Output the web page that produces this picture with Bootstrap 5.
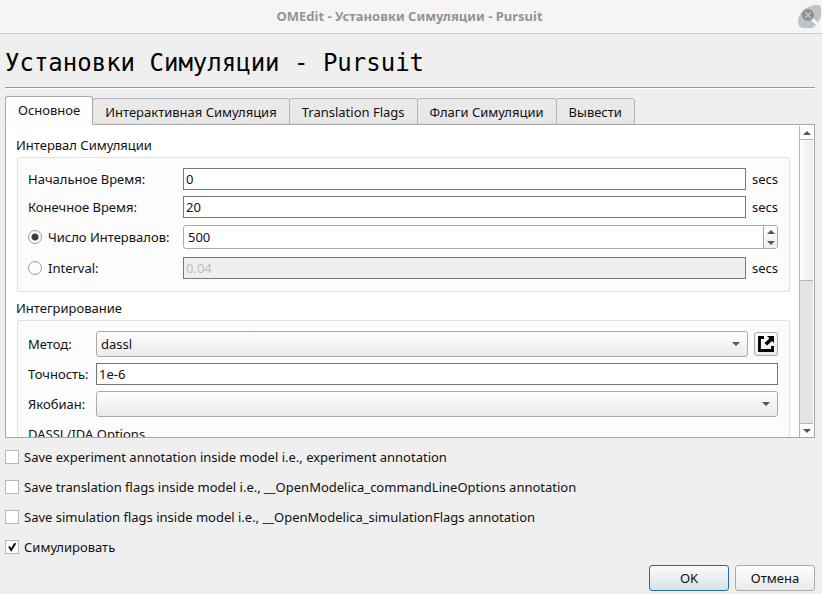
<!DOCTYPE html>
<html lang="ru">
<head>
<meta charset="utf-8">
<meta name="viewport" content="width=device-width, initial-scale=1">
<title>OMEdit - Установки Симуляции - Pursuit</title>
<link href="https://cdn.jsdelivr.net/npm/bootstrap@5.3.0/dist/css/bootstrap.min.css" rel="stylesheet">
<style>
body { font: 13px/18px "Noto Sans", sans-serif; color: #111; background: #efefef; }
button, input, select { font: inherit; color: inherit; }
.titlebar { height: 34px; padding: 0 3px 2px 0; background: #f6f5f4; border-bottom: 1px solid #d5cdc8; color: #929595; }
.app-glyph { top: 4px; right: 0; }
.dialog-body { padding: 0 7px 3px 5px; min-height: 0; }
.dialog-title { font: 24px/30px "DejaVu Sans Mono", monospace; color: #000; padding: 14px 0 9px; border-bottom: 1px solid #999; box-shadow: 0 1px #fff; margin: 0 0 8px; }
.dialog-tabs { border: 0; }
.dialog-tabs .nav-link { height: 27px; padding: 0 12px; margin: 0 0 -1px -1px; line-height: 27px; color: #111; border: 1px solid #b4b4b4; border-radius: 3px 3px 0 0; background: linear-gradient(#e9e9e9 75%, #e2e2e2); }
.dialog-tabs .nav-link.active { height: 29px; margin-left: 0; color: #111; background: linear-gradient(#fff, #fdfdfd); border-color: #a8a8a8 #a8a8a8 #fff; position: relative; z-index: 1; }
.pane { border: 1px solid #a8a8a8; background: #fff; min-height: 0; }
.pane-content { min-width: 0; padding: 11px 9px 0 10px; }
.group-title { line-height: 18px; margin: 0; font-size: 13px; font-weight: 400; }
.sub-title { padding-top: 2px; }
.group-box { border: 1px solid #e1e1e1; border-radius: 2px; background: #fcfcfc; padding: 10px 11px 11px 10px; gap: 6px; margin: 3px 0 7px 1px; }
.field-row { gap: 6px; }
.spin-row { min-height: 26px; }
.last-row { min-height: 24px; }
.wide-label { flex: 0 0 149px; }
.slim-label { flex: 0 0 62px; }
.unit { flex: 0 0 26px; }
.line-edit { height: 22px; min-width: 0; border: 1px solid #777; border-radius: 0; background: #fff; padding: 0 2px; color: #111; }
.line-edit:disabled { background: #efefef; color: #bebebe; opacity: 1; }
.spin { height: 24px; min-width: 0; border: 1px solid #aaa; border-radius: 3px; background: #fff; overflow: hidden; }
.spin input { border: 0; padding: 0 4px; min-width: 0; background: transparent; }
.spin-buttons { width: 14px; border-left: 1px solid #aaa; background: linear-gradient(#fff, #eee); }
.spin-buttons button, .scroller button { border: 0; padding: 0; background: transparent; line-height: 0; }
.combo { height: 26px; min-width: 0; border: 1px solid #aaa; border-radius: 3px; padding: 0 24px 0 4px; appearance: none; color: #111;
  background: url("data:image/svg+xml,%3Csvg xmlns='http://www.w3.org/2000/svg' width='8' height='5'%3E%3Cpath d='M0 0h8L4 4z' fill='%23555'/%3E%3C/svg%3E") no-repeat right 7px center, linear-gradient(#fdfdfd, #ebebeb); }
.tool-btn { width: 24px; height: 24px; padding: 0; border: 1px solid #aaa; border-radius: 3px; background: linear-gradient(#fdfdfd, #ebebeb); }
.radio-dot { appearance: none; width: 14px; height: 14px; margin: 0 6px 0 0; border: 1px solid #999; border-radius: 50%; background: #fff; }
.radio-dot:checked { background: radial-gradient(circle, #3c3c3c 3px, #fff 4px); }
.tick { appearance: none; width: 14px; height: 14px; margin: 0 5px 0 0; border: 1px solid #b8b8b8; background: #fff; }
.tick:checked { background: #fff url("data:image/svg+xml,%3Csvg xmlns='http://www.w3.org/2000/svg' width='12' height='12'%3E%3Cpath d='M3 5.5 5.2 9 9.3 2.3' fill='none' stroke='%23000' stroke-width='1.8'/%3E%3C/svg%3E") center no-repeat; }
.check-row { height: 30px; }
.checks { padding-top: 4px; }
.scroller { flex: 0 0 14px; margin: 1px 1px 0 0; border-left: 1px solid #b6b6b6; background: #e4e4e4; }
.scroller button { height: 14px; background: #fcfcfc; }
.scroller .scroll-up { border-bottom: 1px solid #b6b6b6; }
.scroller .scroll-down { border-top: 1px solid #b6b6b6; }
.scroll-thumb { flex: 141; border-bottom: 1px solid #b6b6b6; background: linear-gradient(90deg, #fdfdfd, #ededed); }
.scroll-rest { flex: 143; }
.push { width: 80px; height: 26px; padding: 0; border: 1px solid #aaa; border-radius: 3px; color: #111; background: linear-gradient(#fefefe, #ebebeb); }
.push-default { border-color: #246f9c; background: linear-gradient(#fafcfd, #d8e1e6); }
.actions { gap: 6px; padding-top: 3px; }
</style>
<script src="https://cdn.jsdelivr.net/npm/bootstrap@5.3.0/dist/js/bootstrap.bundle.min.js"></script>
</head>
<body class="vh-100 d-flex flex-column overflow-hidden">
<header class="titlebar position-relative d-flex align-items-center justify-content-center flex-shrink-0 fw-bold">
  <span>OMEdit - Установки Симуляции - Pursuit</span>
  <svg class="app-glyph position-absolute" width="25" height="25" viewBox="0 0 25 25" aria-hidden="true">
    <path d="M1 17C2 8 8 3 18 1Q23 0 24 4V12Q22 20 15 24H6Q1 23 1 17Z" fill="#bec3c7"/>
    <path d="M15 15l7 7" stroke="#f4f4f3" stroke-width="3"/>
    <circle cx="11" cy="11" r="6" fill="#8b9090"/>
    <path d="M8 8l6 6M14 8l-6 6" stroke="#c4c8ca" stroke-width="1.2"/>
  </svg>
</header>
<main class="dialog-body d-flex flex-column flex-grow-1">
  <h1 class="dialog-title">Установки Симуляции - Pursuit</h1>
  <ul class="nav nav-tabs dialog-tabs align-items-end flex-shrink-0" role="tablist">
    <li class="nav-item"><button class="nav-link active" type="button" role="tab" aria-selected="true">Основное</button></li>
    <li class="nav-item"><button class="nav-link" type="button" role="tab">Интерактивная Симуляция</button></li>
    <li class="nav-item"><button class="nav-link" type="button" role="tab">Translation Flags</button></li>
    <li class="nav-item"><button class="nav-link" type="button" role="tab">Флаги Симуляции</button></li>
    <li class="nav-item"><button class="nav-link" type="button" role="tab">Вывести</button></li>
  </ul>
  <div class="pane d-flex flex-grow-1" role="tabpanel">
    <div class="pane-content flex-grow-1 overflow-hidden">
      <h2 class="group-title">Интервал Симуляции</h2>
      <section class="group-box d-flex flex-column">
        <div class="field-row d-flex align-items-center">
          <label class="wide-label" for="start">Начальное Время:</label>
          <input class="line-edit flex-grow-1" id="start" type="text" value="0"><span class="unit">secs</span>
        </div>
        <div class="field-row d-flex align-items-center">
          <label class="wide-label" for="stop">Конечное Время:</label>
          <input class="line-edit flex-grow-1" id="stop" type="text" value="20"><span class="unit">secs</span>
        </div>
        <div class="field-row spin-row d-flex align-items-center">
          <label class="wide-label d-flex align-items-center"><input class="radio-dot" type="radio" name="mode" checked>Число Интервалов:</label>
          <div class="spin d-flex flex-grow-1">
            <input class="flex-grow-1" type="text" value="500" aria-label="Число Интервалов">
            <div class="spin-buttons d-flex flex-column">
              <button class="flex-fill" type="button" aria-label="+"><svg width="8" height="4"><path d="M0 4 4 0l4 4z" fill="#555"/></svg></button>
              <button class="flex-fill" type="button" aria-label="−"><svg width="8" height="4"><path d="M0 0h8L4 4z" fill="#555"/></svg></button>
            </div>
          </div>
        </div>
        <div class="field-row last-row d-flex align-items-center">
          <label class="wide-label d-flex align-items-center"><input class="radio-dot" type="radio" name="mode">Interval:</label>
          <input class="line-edit flex-grow-1" type="text" value="0.04" aria-label="Interval" disabled><span class="unit">secs</span>
        </div>
      </section>
      <h2 class="group-title">Интегрирование</h2>
      <section class="group-box d-flex flex-column">
        <div class="field-row d-flex align-items-center">
          <label class="slim-label" for="method">Метод:</label>
          <select class="combo flex-grow-1" id="method"><option>dassl</option></select>
          <button class="tool-btn d-flex align-items-center justify-content-center" type="button" aria-label="Открыть">
            <svg width="16" height="16" viewBox="0 0 16 16"><path d="M6 1.5H1.5v13h13V10" fill="none" stroke="#000" stroke-width="2.8"/><path d="M9 0h7v7l-2-2-5 4.5L6.500 7l5-4.500z" fill="#000"/></svg>
          </button>
        </div>
        <div class="field-row d-flex align-items-center">
          <label class="slim-label" for="tol">Точность:</label>
          <input class="line-edit flex-grow-1" id="tol" type="text" value="1e-6">
        </div>
        <div class="field-row d-flex align-items-center">
          <label class="slim-label" for="jac">Якобиан:</label>
          <select class="combo flex-grow-1" id="jac"><option></option></select>
        </div>
        <h3 class="group-title sub-title">DASSL/IDA Options</h3>
      </section>
    </div>
    <div class="scroller d-flex flex-column">
      <button class="scroll-up" type="button" aria-label="Вверх"><svg width="8" height="4"><path d="M0 4 4 0l4 4z" fill="#555"/></svg></button>
      <div class="scroll-thumb"></div>
      <div class="scroll-rest"></div>
      <button class="scroll-down" type="button" aria-label="Вниз"><svg width="8" height="4"><path d="M0 0h8L4 4z" fill="#555"/></svg></button>
    </div>
  </div>
  <div class="checks d-flex flex-column flex-shrink-0 align-items-start">
    <label class="check-row d-flex align-items-center"><input class="tick" type="checkbox">Save experiment annotation inside model i.e., experiment annotation</label>
    <label class="check-row d-flex align-items-center"><input class="tick" type="checkbox">Save translation flags inside model i.e., __OpenModelica_commandLineOptions annotation</label>
    <label class="check-row d-flex align-items-center"><input class="tick" type="checkbox">Save simulation flags inside model i.e., __OpenModelica_simulationFlags annotation</label>
    <label class="check-row d-flex align-items-center"><input class="tick" type="checkbox" checked>Симулировать</label>
  </div>
  <div class="actions d-flex justify-content-end flex-shrink-0">
    <button class="push push-default" type="button">OK</button>
    <button class="push" type="button">Отмена</button>
  </div>
</main>
</body>
</html>
